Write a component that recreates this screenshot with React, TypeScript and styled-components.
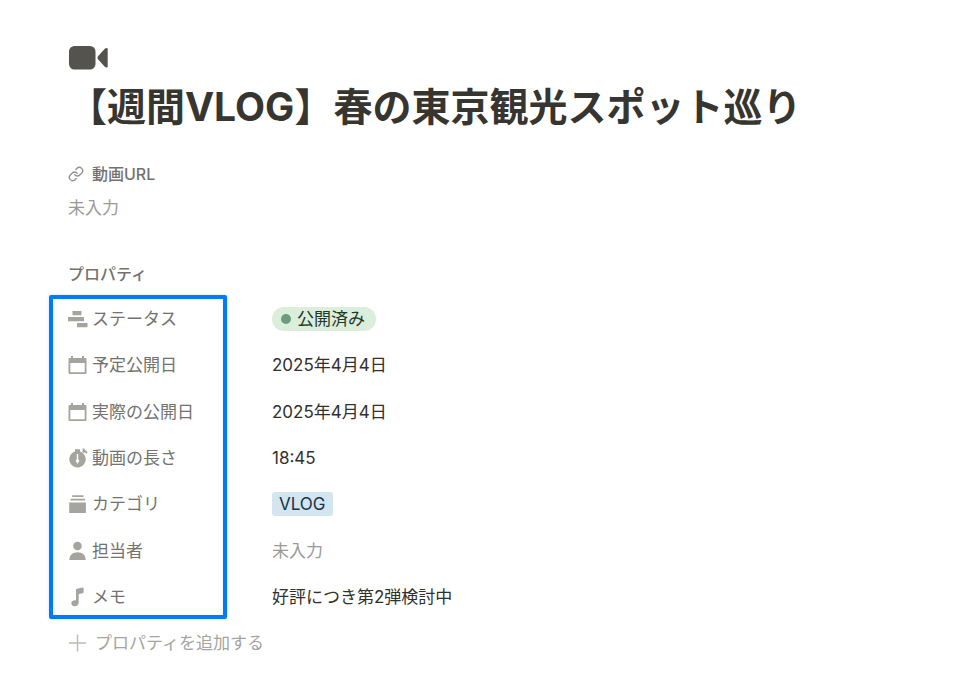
import React from "react";
import styled, { createGlobalStyle } from "styled-components";
import { Link } from "lucide-react";

const GlobalStyle = createGlobalStyle`
  *, *::before, *::after { box-sizing: border-box; }
  body {
    margin: 0;
    background: #ffffff;
    color: #32302c;
    font-family: Inter, "Noto Sans CJK JP", sans-serif;
    font-size: 17px;
    line-height: 24px;
  }
`;

const Page = styled.main`
  padding: 44px 68px 16px;
`;

const CoverIcon = styled.svg`
  display: block;
  width: 40px;
  height: 28px;
  fill: #55534e;
`;

const Title = styled.h1`
  margin: 8px 0 0;
  font-size: 39px;
  line-height: 54px;
  font-weight: 700;
  color: #37352f;
`;

const LinkSection = styled.section`
  margin-top: 28px;
`;

const SectionHeading = styled.h2`
  display: flex;
  align-items: center;
  gap: 8px;
  margin: 0;
  font-size: 16px;
  line-height: 24px;
  font-weight: 500;
  color: #73726e;
`;

const LinkIcon = styled(Link)`
  width: 16px;
  height: 16px;
  color: #91918e;
`;

const EmptyText = styled.span`
  color: #9b9a97;
`;

const LinkValue = styled.p`
  margin: 10px 0 0;
`;

const PropertySection = styled.section`
  margin-top: 42px;
`;

const Properties = styled.div`
  position: relative;
  margin-top: 10px;
`;

const PropertyList = styled.dl`
  display: grid;
  grid-auto-rows: 1fr;
  min-height: 324px;
  margin: 0;
`;

const PropertyRow = styled.div`
  display: grid;
  grid-template-columns: 204px 1fr;
  align-items: center;
`;

const PropertyName = styled.dt`
  display: flex;
  align-items: center;
  gap: 4px;
  color: #73726e;
`;

const PropertyValue = styled.dd`
  display: flex;
  align-items: center;
  margin: 0;
`;

const RowIcon = styled.svg`
  flex: none;
  width: 20px;
  height: 20px;
  fill: #a5a49f;
`;

const Highlight = styled.div`
  position: absolute;
  top: -1px;
  bottom: 1px;
  left: -19px;
  width: 178px;
  border: 4px solid #007bff;
  border-radius: 2px;
  box-shadow: 0 0 3px rgba(0, 0, 0, 0.16), inset 0 0 3px rgba(0, 0, 0, 0.1);
  pointer-events: none;
`;

const StatusTag = styled.span`
  display: inline-flex;
  align-items: center;
  gap: 6px;
  height: 24px;
  padding: 0 11px 0 9px;
  border-radius: 12px;
  background: #dbeddb;
  color: #1c3829;

  &::before {
    content: "";
    width: 10px;
    height: 10px;
    border-radius: 50%;
    background: #6c9b7d;
  }
`;

const CategoryTag = styled.span`
  height: 24px;
  padding: 0 7px;
  border-radius: 3px;
  background: #d3e5ef;
  color: #183347;
`;

const AddButton = styled.button`
  display: flex;
  align-items: center;
  gap: 7px;
  height: 46px;
  padding: 0;
  border: 0;
  background: none;
  font: inherit;
  color: #a5a49f;
  cursor: pointer;
`;

const PlusIcon = styled(RowIcon)`
  fill: none;
  stroke: #bbbab6;
  stroke-width: 1.4;
`;

type IconName = "status" | "calendar" | "timer" | "stack" | "person" | "music";

const shapes: Record<IconName, React.ReactNode> = {
  status: <path d="M4.500 2h9v4.300h-9zM0 8h16v4.200H0zM9 14h10.500v4.200H9z" />,
  calendar: (
    <path
      fillRule="evenodd"
      d="M3 1h2v2h9V1h2v2h1.500q1 0 1 1v14q0 1-1 1h-16q-1 0-1-1V4q0-1 1-1H3zM2.300 8v9.200h14.400V8z"
    />
  ),
  timer: (
    <path
      fillRule="evenodd"
      d="M7 1.300h5v2.100a8.200 8.200 0 1 1-5 0zM14.300 1l1.500-.8 3.900 4.300-1.400 1.300-1.500-1.500-1 1-1.800-1.700 1-1zM8.800 6v5.200l-1.200 1.200 1.900 3.600 1.900-3.600-1.200-1.200V6z"
    />
  ),
  stack: <path d="M4.200 1.300h11.300v1.700H4.200zM2.500 4.700h14.600v1.900H2.500zM1.200 8.400h16.700v10.500H1.200z" />,
  person: (
    <>
      <circle cx="9.500" cy="5" r="4.300" />
      <path d="M1.300 19c0-5 3.700-7.700 8.200-7.700s8.200 2.700 8.200 7.700z" />
    </>
  ),
  music: (
    <path d="M8 2.800q0-.8.800-1l5.800-1.300q1-.2 1 .8v3.900q0 .8-.8 1l-4.100.9v8.200c0 2.500-1.700 3.900-3.900 3.900-2 0-3.500-1-3.500-2.900 0-2 1.700-3.100 3.600-3.100H8z" />
  ),
};

type Property = { name: string; icon: IconName; value: React.ReactNode };

const properties: Property[] = [
  { name: "ステータス", icon: "status", value: <StatusTag>公開済み</StatusTag> },
  { name: "予定公開日", icon: "calendar", value: "2025年4月4日" },
  { name: "実際の公開日", icon: "calendar", value: "2025年4月4日" },
  { name: "動画の長さ", icon: "timer", value: "18:45" },
  { name: "カテゴリ", icon: "stack", value: <CategoryTag>VLOG</CategoryTag> },
  { name: "担当者", icon: "person", value: <EmptyText>未入力</EmptyText> },
  { name: "メモ", icon: "music", value: "好評につき第2弾検討中" },
];

export default function App() {
  return (
    <>
      <GlobalStyle />
      <Page lang="ja">
        <CoverIcon viewBox="0 0 40 28" aria-hidden="true">
          <rect x="1" y="2" width="26.500" height="23.500" rx="5.500" />
          <path d="M29.500 13.800q0-1 .7-1.700l6.600-7.300q.8-.8 2-.8.900 0 .9 1v17.500q0 1-.9 1-1.200 0-2-.8l-6.600-7.200q-.7-.7-.7-1.700z" />
        </CoverIcon>
        <Title>【週間VLOG】春の東京観光スポット巡り</Title>

        <LinkSection>
          <SectionHeading>
            <LinkIcon strokeWidth={2} aria-hidden="true" />
            動画URL
          </SectionHeading>
          <LinkValue>
            <EmptyText>未入力</EmptyText>
          </LinkValue>
        </LinkSection>

        <PropertySection>
          <SectionHeading>プロパティ</SectionHeading>
          <Properties>
            <PropertyList>
              {properties.map(({ name, icon, value }) => (
                <PropertyRow key={name}>
                  <PropertyName>
                    <RowIcon viewBox="0 0 20 20" aria-hidden="true">
                      {shapes[icon]}
                    </RowIcon>
                    {name}
                  </PropertyName>
                  <PropertyValue>{value}</PropertyValue>
                </PropertyRow>
              ))}
            </PropertyList>
            <Highlight />
          </Properties>
          <AddButton type="button">
            <PlusIcon viewBox="0 0 20 20" aria-hidden="true">
              <path d="M9.500 1.500v17M1 10h17" />
            </PlusIcon>
            プロパティを追加する
          </AddButton>
        </PropertySection>
      </Page>
    </>
  );
}
